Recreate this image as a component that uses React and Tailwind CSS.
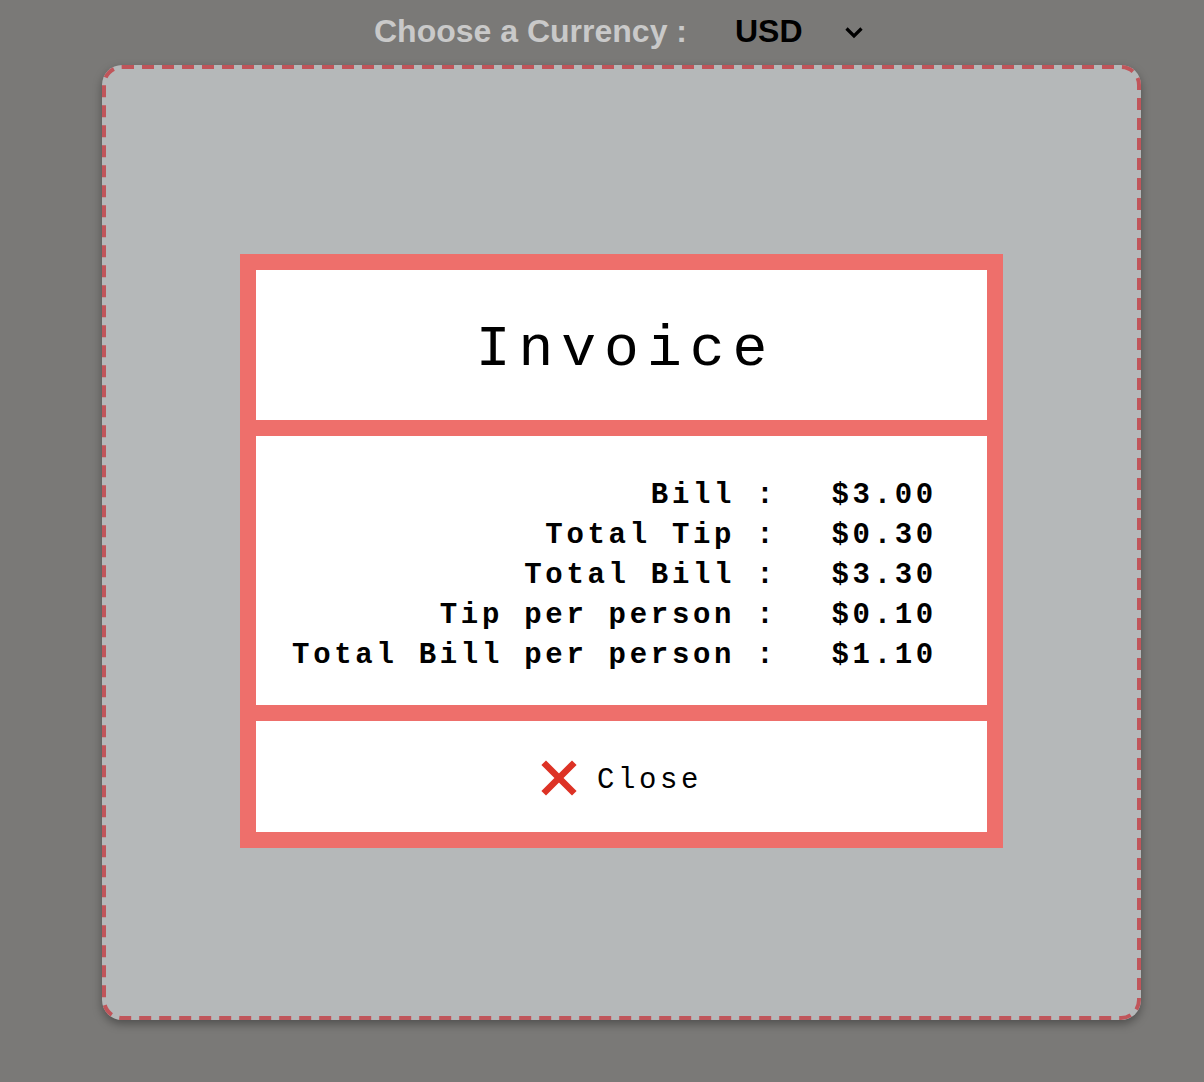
import { useState } from "react";

const rows = [
  ["Bill", "$3.00"],
  ["Total Tip", "$0.30"],
  ["Total Bill", "$3.30"],
  ["Tip per person", "$0.10"],
  ["Total Bill per person", "$1.10"],
];

export default function App() {
  const [currency, setCurrency] = useState("USD");

  return (
    <div className="min-h-[1082px] bg-[#7a7977] font-['Liberation_Sans',Arial,sans-serif]">
      {/* Currency picker */}
      <div className="flex h-[61px] items-center pl-[374px]">
        <label className="text-[32px] font-bold text-[#c9c9c9]">
          Choose a Currency :
        </label>
        <div className="relative ml-[48px]">
          <select
            value={currency}
            onChange={(e) => setCurrency(e.target.value)}
            className="w-[128px] appearance-none bg-transparent text-[32px] font-bold text-black outline-none"
          >
            <option>USD</option>
            <option>EUR</option>
            <option>GBP</option>
          </select>
          <svg
            className="pointer-events-none absolute right-[-1px] top-[19px]"
            width="20"
            height="14"
            viewBox="0 0 20 14"
          >
            <path d="M2.5 2.5l7.5 7.5 7.5-7.5" fill="none" stroke="#000" strokeWidth="3.2" />
          </svg>
        </div>
      </div>

      {/* Card */}
      <div className="relative ml-[102px] mt-[4px] flex h-[955px] w-[1039px] items-start justify-center rounded-[20px] bg-[#b5b8b9] pt-[189px] shadow-[0_4px_10px_rgba(0,0,0,0.35)]">
        <svg
          className="pointer-events-none absolute inset-0"
          width="1039"
          height="955"
        >
          <rect
            x="2"
            y="2"
            width="1035"
            height="951"
            rx="18"
            fill="none"
            stroke="#c0555a"
            strokeWidth="4"
            strokeDasharray="12 8"
          />
        </svg>

        <div className="relative h-[594px] w-[763px] border-[16px] border-[#ee6f6b] bg-white font-['Courier_New','Nimbus_Mono_PS','Liberation_Mono',monospace] text-black">
          {/* Title */}
          <div className="flex h-[150px] items-center justify-center pt-[8px] pl-[8px]">
            <h1 className="text-[58px] tracking-[8px]">Invoice</h1>
          </div>
          <div className="h-[16px] bg-[#ee6f6b]" />

          {/* Totals */}
          <div className="flex h-[269px] items-start justify-center pt-[40px]">
            <div className="mr-[14px] grid grid-cols-[auto_auto] gap-x-[54px] text-[29px] font-bold leading-[40px] tracking-[3.7px]">
              {rows.map(([label, value]) => (
                <div key={label} className="contents">
                  <span className="text-right">{label} :</span>
                  <span>{value}</span>
                </div>
              ))}
            </div>
          </div>
          <div className="h-[16px] bg-[#ee6f6b]" />

          {/* Close */}
          <div className="flex h-[111px] items-center justify-center">
            <button className="flex items-center gap-[20px] pt-[6px] text-[29px] tracking-[3.6px]">
              <svg width="36" height="36" viewBox="0 0 36 36" className="-mt-[3px]">
                <path
                  d="M5 5L31 31M31 5L5 31"
                  stroke="#dd3225"
                  strokeWidth="6.5"
                  strokeLinecap="square"
                />
              </svg>
              <span className="pt-[3px]">Close</span>
            </button>
          </div>
        </div>
      </div>
    </div>
  );
}
